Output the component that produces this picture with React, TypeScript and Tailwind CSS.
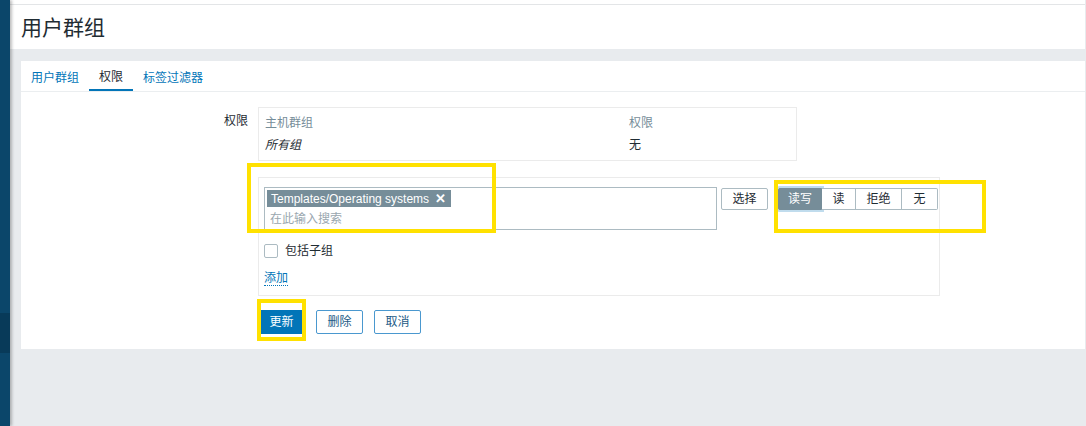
import React from "react";

const font = { fontFamily: '"Liberation Sans", Arial, "Noto Sans CJK SC", sans-serif' };

function Sidebar() {
  return (
    <div className="relative flex h-full w-[10px] shrink-0 flex-col bg-[#0b466a] shadow-[2px_0_3px_rgba(0,0,0,0.25)] z-10">
      <div className="h-[313px]" />
      <div className="h-[40px] bg-[#083a59]" />
    </div>
  );
}

function Tabs() {
  const tabs = ["用户群组", "权限", "标签过滤器"];
  return (
    <div className="flex h-[31px] border-b border-[#ebeef0]">
      {tabs.map((t, i) => (
        <div
          key={t}
          className={
            "flex h-[30px] items-center px-[10px] pt-[3px] text-[12px] " +
            (i === 1
              ? "border-b-2 border-[#0275b8] text-[#1f2c33]"
              : "text-[#0275b8]")
          }
        >
          {t}
        </div>
      ))}
    </div>
  );
}

function Highlight({ className }: { className: string }) {
  return <div className={"pointer-events-none absolute border-[4px] border-[#ffe100] " + className} />;
}

function PermissionForm() {
  const levels = ["读写", "读", "拒绝", "无"];
  return (
    <div className="flex pt-[15px] text-[12px] text-[#1f2c33]">
      <div className="w-[237px] shrink-0 pr-[10px] pt-[5px] text-right">权限</div>
      <div className="flex flex-col">
        {/* current rights table */}
        <div className="flex h-[54px] w-[539px] flex-col border border-[#ebebeb] px-[6px] pt-[7px]">
          <div className="flex h-[16px] items-center text-[#768d99]">
            <div className="w-[364px]">主机群组</div>
            <div>权限</div>
          </div>
          <div className="mt-[6px] flex h-[16px] items-center">
            <div className="w-[364px] italic">所有组</div>
            <div>无</div>
          </div>
        </div>

        {/* new rights editor */}
        <div className="mt-[16px] flex h-[119px] w-[682px] flex-col border border-[#ebebeb] px-[5px] pt-[9px]">
          <div className="flex items-start">
            <div className="flex h-[43px] w-[453px] shrink-0 flex-col border border-[#acbbc2] p-[2px]">
              <div className="flex h-[17px] w-fit items-center gap-[6px] bg-[#768d99] pl-[4px] pr-[5px] text-white">
                <span>Templates/Operating systems</span>
                <span className="text-[13px] font-bold leading-none">✕</span>
              </div>
              <div className="mt-[3px] pl-[3px] text-[#9aa7af]">在此输入搜索</div>
            </div>
            <button className="ml-[4px] mt-[1px] h-[22px] w-[47px] shrink-0 rounded-[2px] border border-[#acbbc2] bg-white text-[12px] text-[#1f2c33]">
              选择
            </button>
            <div className="ml-[10px] mt-[1px] flex h-[22px] shrink-0">
              {levels.map((l, i) => (
                <div
                  key={l}
                  className={
                    "flex shrink-0 items-center justify-center border " +
                    (i === 0
                      ? "w-[44px] rounded-l-[2px] border-[#768d99] bg-[#768d99] text-white shadow-[0_0_0_2px_rgba(2,117,184,0.25)]"
                      : i === 1
                      ? "w-[34px] border-l-0 border-[#acbbc2] bg-white"
                      : i === 2
                      ? "w-[46px] border-l-0 border-[#acbbc2] bg-white"
                      : "w-[36px] rounded-r-[2px] border-l-0 border-[#acbbc2] bg-white")
                  }
                >
                  {l}
                </div>
              ))}
            </div>
          </div>
          <label className="mt-[12px] flex items-center gap-[7px]">
            <span className="h-[14px] w-[14px] rounded-[2px] border border-[#acbbc2] bg-white" />
            <span>包括子组</span>
          </label>
          <div className="mt-[9px]">
            <span className="border-b border-dotted border-[#0275b8] text-[#0275b8]">添加</span>
          </div>
        </div>

        {/* form actions */}
        <div className="mt-[14px] flex gap-[11px]">
          <button className="h-[24px] w-[47px] rounded-[2px] bg-[#0275b8] text-[12px] text-white">更新</button>
          <button className="h-[24px] w-[47px] rounded-[2px] border border-[#4a98cf] bg-white text-[12px] text-[#1d5a86]">删除</button>
          <button className="h-[24px] w-[47px] rounded-[2px] border border-[#4a98cf] bg-white text-[12px] text-[#1d5a86]">取消</button>
        </div>
      </div>
    </div>
  );
}

export default function App() {
  return (
    <div style={font} className="relative flex h-[426px] w-[1086px] overflow-hidden bg-white">
      <Sidebar />
      <div className="flex flex-1 flex-col bg-[#e8ebee] pr-[1px]">
        <div className="h-[5px] border-b border-[#e3e5e7] bg-white" />
        <div className="flex h-[44px] items-center bg-white pl-[11px] pt-[2px] text-[21px] text-[#1f2c33]">
          用户群组
        </div>
        <div className="ml-[11px] mt-[12px] h-[288px] bg-white">
          <Tabs />
          <PermissionForm />
        </div>
      </div>

      <Highlight className="left-[247px] top-[163px] h-[70px] w-[249px]" />
      <Highlight className="left-[774px] top-[180px] h-[53px] w-[212px]" />
      <Highlight className="left-[257px] top-[299px] h-[42px] w-[49px]" />
    </div>
  );
}
